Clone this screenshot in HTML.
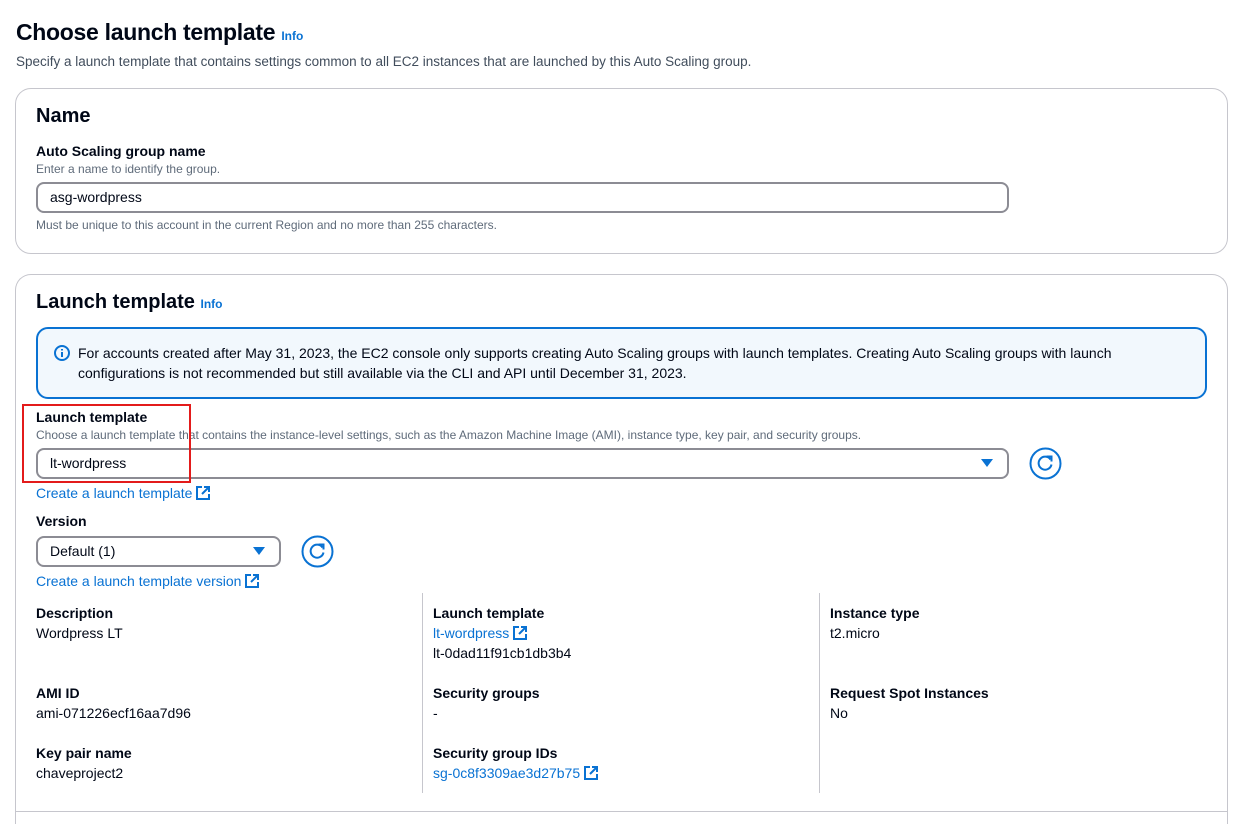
<!DOCTYPE html>
<html style="width:1236px;height:824px;overflow:hidden"><head><meta charset="utf-8"><style>
*{box-sizing:border-box;margin:0;padding:0}
body{width:1236px;height:824px;overflow:hidden;background:#fff;font-family:"Liberation Sans",Arial,sans-serif;color:#000716;font-size:14px;position:relative}
.a{position:absolute;white-space:nowrap}
.b{font-weight:bold}
.s{font-size:12px;color:#5f6b7a}
.l{color:#0972d3}
.card{position:absolute;border:1px solid #c6c6cd;border-radius:16px;background:#fff}
.inp{position:absolute;border:2px solid #8c8c94;border-radius:8px;background:#fff;padding-left:12px;line-height:26px}
.tri{position:absolute;width:0;height:0;border-left:6px solid transparent;border-right:6px solid transparent;border-top:8px solid #0972d3}
.ext{display:inline-block;vertical-align:-2px;margin-left:4px}
.vl{position:absolute;width:1px;background:#c6c6cd;top:593px;height:200px}
</style></head><body>
<div class="a b" style="left:16px;top:19px;font-size:23px;letter-spacing:-0.3px">Choose launch template <span class="l" style="font-size:12px;letter-spacing:0">Info</span></div>
<div class="a" style="left:16px;top:54px;font-size:13.5px;color:#414d5c">Specify a launch template that contains settings common to all EC2 instances that are launched by this Auto Scaling group.</div>

<div class="card" style="left:15px;top:88px;width:1213px;height:166px"></div>
<div class="a b" style="left:36px;top:105px;font-size:20px">Name</div>
<div class="a b" style="left:36px;top:143px">Auto Scaling group name</div>
<div class="a s" style="left:36px;top:162px">Enter a name to identify the group.</div>
<div class="inp" style="left:36px;top:182px;width:973px;height:31px">asg-wordpress</div>
<div class="a s" style="left:36px;top:218px">Must be unique to this account in the current Region and no more than 255 characters.</div>

<div class="card" style="left:15px;top:274px;width:1213px;height:550px;border-bottom:none;border-radius:16px 16px 0 0"></div>
<div class="a b" style="left:36px;top:291px;font-size:20px">Launch template <span class="l" style="font-size:12px">Info</span></div>
<div style="position:absolute;left:36px;top:327px;width:1171px;height:72px;border:2px solid #0972d3;border-radius:12px;background:#f2f8fd"></div>
<svg class="a" style="left:54px;top:345px" width="16" height="16" viewBox="0 0 16 16"><circle cx="8" cy="8" r="7" fill="none" stroke="#0972d3" stroke-width="2"/><path d="M8 7v5M8 4v1.5" stroke="#0972d3" stroke-width="2"/></svg>
<div class="a" style="left:78px;top:343px;line-height:20px">For accounts created after May 31, 2023, the EC2 console only supports creating Auto Scaling groups with launch templates. Creating Auto Scaling groups with launch<br>configurations is not recommended but still available via the CLI and API until December 31, 2023.</div>

<div class="a b" style="left:36px;top:409px">Launch template</div>
<div class="a s" style="left:36px;top:428px">Choose a launch template that contains the instance-level settings, such as the Amazon Machine Image (AMI), instance type, key pair, and security groups.</div>
<div class="inp" style="left:36px;top:448px;width:973px;height:31px">lt-wordpress</div>
<div class="tri" style="left:981px;top:459px"></div>
<svg class="a" style="left:1029px;top:447px" width="33" height="33" viewBox="0 0 33 33"><circle cx="16.5" cy="16.5" r="15" fill="none" stroke="#0972d3" stroke-width="2"/><path d="M21.5 12.5a6.5 6.5 0 1 0 1 5" fill="none" stroke="#0972d3" stroke-width="2"/><path d="M17.5 9.5h5v5" fill="none" stroke="#0972d3" stroke-width="2"/></svg>
<div style="position:absolute;left:22px;top:404px;width:169px;height:79px;border:2px solid #e31b1b"></div>
<div class="a l" style="left:36px;top:485px">Create a launch template<svg class="ext" width="14" height="14" viewBox="0 0 14 14"><path d="M6 1H1v12h12V8M8 1h5v5M13 1L6 8" fill="none" stroke="#0972d3" stroke-width="2"/></svg></div>

<div class="a b" style="left:36px;top:513px">Version</div>
<div class="inp" style="left:36px;top:536px;width:245px;height:31px">Default (1)</div>
<div class="tri" style="left:253px;top:547px"></div>
<svg class="a" style="left:301px;top:535px" width="33" height="33" viewBox="0 0 33 33"><circle cx="16.5" cy="16.5" r="15" fill="none" stroke="#0972d3" stroke-width="2"/><path d="M21.5 12.5a6.5 6.5 0 1 0 1 5" fill="none" stroke="#0972d3" stroke-width="2"/><path d="M17.5 9.5h5v5" fill="none" stroke="#0972d3" stroke-width="2"/></svg>
<div class="a l" style="left:36px;top:573px">Create a launch template version<svg class="ext" width="14" height="14" viewBox="0 0 14 14"><path d="M6 1H1v12h12V8M8 1h5v5M13 1L6 8" fill="none" stroke="#0972d3" stroke-width="2"/></svg></div>

<div class="vl" style="left:422px"></div><div class="vl" style="left:819px"></div>
<div class="a" style="left:36px;top:603px;line-height:20px"><b>Description</b><br>Wordpress LT</div>
<div class="a" style="left:36px;top:683px;line-height:20px"><b>AMI ID</b><br>ami-071226ecf16aa7d96</div>
<div class="a" style="left:36px;top:743px;line-height:20px"><b>Key pair name</b><br>chaveproject2</div>
<div class="a" style="left:433px;top:603px;line-height:20px"><b>Launch template</b><br><span class="l">lt-wordpress<svg class="ext" width="14" height="14" viewBox="0 0 14 14"><path d="M6 1H1v12h12V8M8 1h5v5M13 1L6 8" fill="none" stroke="#0972d3" stroke-width="2"/></svg></span><br>lt-0dad11f91cb1db3b4</div>
<div class="a" style="left:433px;top:683px;line-height:20px"><b>Security groups</b><br>-</div>
<div class="a" style="left:433px;top:743px;line-height:20px"><b>Security group IDs</b><br><span class="l">sg-0c8f3309ae3d27b75<svg class="ext" width="14" height="14" viewBox="0 0 14 14"><path d="M6 1H1v12h12V8M8 1h5v5M13 1L6 8" fill="none" stroke="#0972d3" stroke-width="2"/></svg></span></div>
<div class="a" style="left:830px;top:603px;line-height:20px"><b>Instance type</b><br>t2.micro</div>
<div class="a" style="left:830px;top:683px;line-height:20px"><b>Request Spot Instances</b><br>No</div>
<div style="position:absolute;left:16px;top:811px;width:1211px;height:1px;background:#c6c6cd"></div>
</body></html>
